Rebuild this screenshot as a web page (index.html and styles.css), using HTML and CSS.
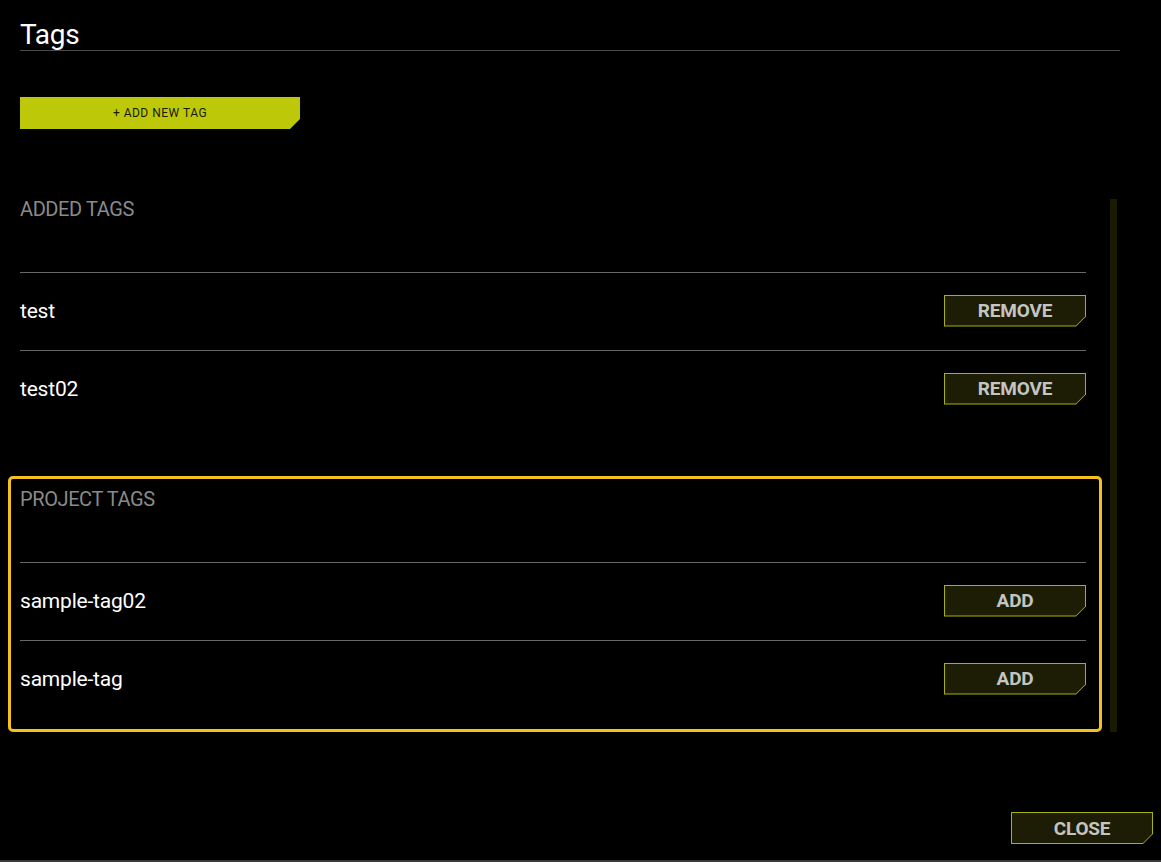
FILE: index.html
```html
<!DOCTYPE html>
<html lang="en">
<head>
<meta charset="utf-8">
<title>Tags</title>
<link rel="stylesheet" href="styles.css">
</head>
<body>
<div class="page">
  <header class="header">
    <h1 class="title">Tags</h1>
  </header>
  <div class="add-wrap">
    <button class="add-new"><span>+ ADD NEW TAG</span></button>
  </div>
  <div class="body">
    <div class="lists">
      <section class="group">
        <h2 class="group-title">ADDED TAGS</h2>
        <div class="row">
          <span class="tag-name">test</span>
          <button class="btn"><span class="btn-in">REMOVE</span></button>
        </div>
        <div class="row">
          <span class="tag-name">test02</span>
          <button class="btn"><span class="btn-in">REMOVE</span></button>
        </div>
      </section>
      <section class="group group-focus">
        <h2 class="group-title">PROJECT TAGS</h2>
        <div class="row">
          <span class="tag-name">sample-tag02</span>
          <button class="btn"><span class="btn-in">ADD</span></button>
        </div>
        <div class="row">
          <span class="tag-name">sample-tag</span>
          <button class="btn"><span class="btn-in">ADD</span></button>
        </div>
      </section>
    </div>
    <div class="scrollbar"></div>
  </div>
  <footer class="footer">
    <button class="btn btn-close"><span class="btn-in">CLOSE</span></button>
  </footer>
</div>
</body>
</html>
```

FILE: styles.css
```css
* { box-sizing: border-box; }
html, body {
  margin: 0;
  padding: 0;
  background: #000;
  color: #fff;
  font-family: Roboto, "Liberation Sans", sans-serif;
}
.page {
  width: 1161px;
  height: 862px;
  display: flex;
  flex-direction: column;
  border-bottom: 2px solid #3a3a3a;
  overflow: hidden;
}
.header {
  padding: 0 41px 0 20px;
}
.title {
  margin: 0;
  height: 51px;
  padding-top: 19px;
  font-size: 28px;
  line-height: 32px;
  font-weight: 400;
  letter-spacing: -0.3px;
  color: #fff;
  border-bottom: 1px solid #4a4a4a;
}
.add-wrap {
  padding: 46px 0 0 20px;
}
.add-new {
  display: block;
  width: 280px;
  height: 32px;
  border: 0;
  padding: 0;
  background: #bcc808;
  clip-path: polygon(0 0, 100% 0, 100% 22px, 270px 100%, 0 100%);
  font-family: Roboto, "Liberation Sans", sans-serif;
  font-size: 12px;
  letter-spacing: 0.5px;
  color: #1a1a00;
  cursor: pointer;
}
.body {
  display: flex;
  align-items: flex-start;
  padding: 57px 0 0 8px;
}
.lists {
  width: 1094px;
  display: flex;
  flex-direction: column;
  gap: 34px;
}
.group {
  border: 3px solid transparent;
  border-radius: 5px;
  padding: 0 13px 11px 9px;
}
.group-focus {
  border-color: #f5c21b;
}
.group-title {
  margin: 0;
  height: 83px;
  padding-top: 8px;
  font-size: 20px;
  line-height: 24px;
  font-weight: 400;
  letter-spacing: -0.4px;
  color: #8a8a8a;
}
.row {
  height: 78px;
  border-top: 1px solid #686868;
  display: flex;
  align-items: center;
  justify-content: space-between;
  padding-bottom: 2px;
}
.tag-name {
  font-size: 21px;
  color: #fff;
  letter-spacing: -0.2px;
}
.btn {
  display: block;
  width: 142px;
  height: 32px;
  border: 0;
  padding: 1px;
  background: #a9b20c;
  clip-path: polygon(0 0, 100% 0, 100% 22px, 132px 100%, 0 100%);
  cursor: pointer;
}
.btn-in {
  display: flex;
  align-items: center;
  justify-content: center;
  width: 100%;
  height: 100%;
  background: #1d1d05;
  clip-path: polygon(0 0, 100% 0, 100% 21px, 131px 100%, 0 100%);
  font-family: Roboto, "Liberation Sans", sans-serif;
  font-size: 19px;
  font-weight: 700;
  letter-spacing: -0.2px;
  color: #c4c4c0;
}
.scrollbar {
  width: 7px;
  height: 533px;
  margin: 13px 0 0 8px;
  background: #1b1b02;
}
.footer {
  margin-top: auto;
  display: flex;
  justify-content: flex-end;
  padding: 0 8px 16px 0;
}
```
